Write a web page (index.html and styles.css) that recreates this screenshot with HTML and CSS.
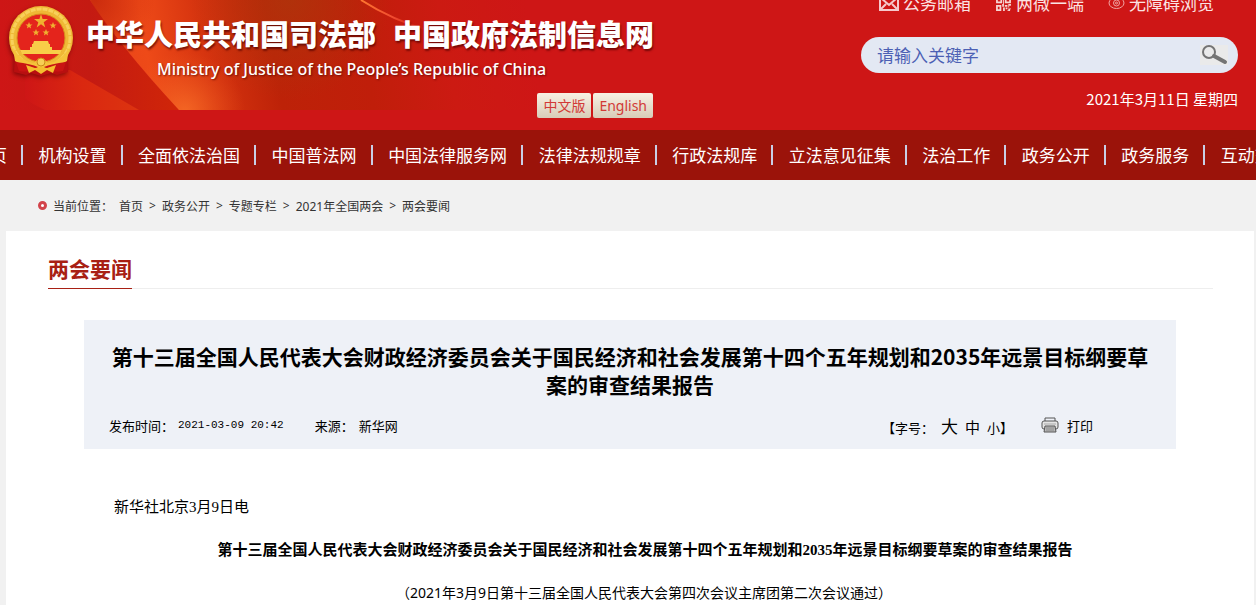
FILE: index.html
```html
<!DOCTYPE html>
<html lang="zh-CN">
<head>
<meta charset="UTF-8">
<meta name="viewport" content="width=device-width, initial-scale=1">
<title>两会要闻</title>
<link rel="stylesheet" href="styles.css">
</head>
<body>

<header class="header">
  <!-- banner artwork behind the site name -->
  <svg class="banner" width="640" height="110" viewBox="0 0 640 110" aria-hidden="true">
    <defs>
      <linearGradient id="left" x1="0" x2="1" y1="0" y2="0">
        <stop offset="0" stop-color="#ce1616"/>
        <stop offset="0.5" stop-color="#c41a12"/>
        <stop offset="1" stop-color="#d02608"/>
      </linearGradient>
      <linearGradient id="glow" gradientUnits="userSpaceOnUse" x1="100" y1="60" x2="570" y2="-20">
        <stop offset="0" stop-color="#e8441a"/>
        <stop offset="0.1" stop-color="#ee4a18"/>
        <stop offset="0.22" stop-color="#d6340f"/>
        <stop offset="0.36" stop-color="#bd2208"/>
        <stop offset="0.55" stop-color="#c01e0a"/>
        <stop offset="0.72" stop-color="#cc1a12"/>
        <stop offset="0.9" stop-color="#ce1616"/>
      </linearGradient>
      <linearGradient id="fold" gradientUnits="userSpaceOnUse" x1="25" y1="0" x2="140" y2="0">
        <stop offset="0" stop-color="#ce1616"/>
        <stop offset="0.5" stop-color="#da2810"/>
        <stop offset="1" stop-color="#dc3410"/>
      </linearGradient>
      <radialGradient id="spot" gradientUnits="userSpaceOnUse" cx="290" cy="0" r="100">
        <stop offset="0" stop-color="#a83c0c" stop-opacity="0.6"/>
        <stop offset="1" stop-color="#a83c0c" stop-opacity="0"/>
      </radialGradient>
      <radialGradient id="dark" gradientUnits="userSpaceOnUse" cx="95" cy="0" r="60">
        <stop offset="0" stop-color="#c02208" stop-opacity="0.7"/>
        <stop offset="1" stop-color="#c02208" stop-opacity="0"/>
      </radialGradient>
      <radialGradient id="foot" gradientUnits="userSpaceOnUse" cx="185" cy="112" r="60">
        <stop offset="0" stop-color="#f87028" stop-opacity="0.8"/>
        <stop offset="1" stop-color="#f05a20" stop-opacity="0"/>
      </radialGradient>
      <linearGradient id="streak" gradientUnits="userSpaceOnUse" x1="360" y1="0" x2="430" y2="30">
        <stop offset="0" stop-color="#ff7a30"/>
        <stop offset="0.5" stop-color="#f04a30"/>
        <stop offset="1" stop-color="#e02a12" stop-opacity="0"/>
      </linearGradient>
    </defs>
    <path d="M0 0H90Q118 44 179 110H0Z" fill="url(#left)"/>
    <path d="M25 70L70 70L139 110H45Q28 102 25 98Z" fill="url(#fold)"/>
    <path d="M90 0H640V110H179Q118 44 90 0Z" fill="url(#glow)"/>
    <path d="M90 0H160V60H130Q105 26 90 0Z" fill="url(#dark)"/>
    <path d="M120 45H260V110H179Z" fill="url(#foot)"/>
    <path d="M190 0H400V110H190Z" fill="url(#spot)"/>
    <path d="M361 0Q392 20 430 31" fill="none" stroke="url(#streak)" stroke-width="2"/>
  </svg>

  <div class="brand">
    <svg class="emblem" width="68" height="74" viewBox="0 0 68 74" role="img" aria-label="国徽">
      <path d="M8 48L7 68L19 71L24 69L34 72L44 69L50 71L61 68L60 48Z" fill="#b80f10"/>
      <circle cx="34" cy="34" r="32" fill="#efb835"/>
      <circle cx="34" cy="34" r="29" fill="none" stroke="#f8d05a" stroke-width="3" stroke-dasharray="5 1"/>
      <circle cx="34" cy="34" r="24" fill="#e4241c" stroke="#d88f1c"/>
      <g fill="#f0b030">
        <path d="M34 10L35.600 15H41L36.700 18.200L38.300 23.500L34 20.300L29.700 23.500L31.300 18.200L27 15H32.400Z"/>
        <path d="M22 18L23 20.500H25.500L23.500 22L24 24.500L22 23L20 24.500L20.500 22L18.500 20.500H21Z"/>
        <path d="M46 18L47 20.500H49.500L47.500 22L48 24.500L46 23L44 24.500L44.500 22L42.500 20.500H45Z"/>
        <path d="M29 25L30 27.500H32.500L30.500 29L31 31.500L29 30L27 31.500L27.500 29L25.500 27.500H28Z"/>
        <path d="M39 25L40 27.500H42.500L40.500 29L41 31.500L39 30L37 31.500L37.500 29L35.500 27.500H38Z"/>
      </g>
      <path d="M27 37H41L42 40H43V43H25V40H26ZM23 43H45V46H23ZM13 46H55L53 50H15Z" fill="#f8cd48"/>
      <path d="M6 44Q14 58 27 59Q34 50 41 59Q54 58 62 44L60 57Q48 64 39 62L34 65L29 62Q20 64 8 57Z" fill="#f5c23a"/>
      <path d="M9 58Q24 60 31 63Q26 69 12 67ZM59 58Q44 60 37 63Q42 69 56 67Z" fill="#c91413"/>
      <circle cx="34" cy="58" r="4" fill="#f7cf55" stroke="#cc8a18"/>
      <path d="M19 61L28 64L34 63L40 64L49 61L46 69L40 66L34 70L28 66L22 69Z" fill="#f5bd2e"/>
    </svg>
    <div class="names">
      <h1 class="site-name"><span>中华人民共和国司法部</span><span>中国政府法制信息网</span></h1>
      <p class="site-name-en">Ministry of Justice of the People’s Republic of China</p>
      <div class="langs">
        <button type="button" class="lang">中文版</button>
        <button type="button" class="lang">English</button>
      </div>
    </div>
  </div>

  <div class="tools">
    <div class="top-links">
      <a href="#">
        <svg width="20" height="14" viewBox="0 0 20 14" fill="none" stroke="#f6c9cc" stroke-width="2"><path d="M1 1H19V13H1ZM2 1L10 8L18 1M2 12L7 7M18 12L13 7"/></svg>
        公务邮箱
      </a>
      <a href="#">
        <svg width="17" height="14" viewBox="0 0 17 16" fill="#f6d5d2"><path fill-rule="evenodd" d="M0 0H7V7H0ZM2 2V5H5V2ZM10 0H17V7H10ZM12 2V5H15V2ZM0 9H6V16H0ZM2 11V14H4V11Z"/><path d="M8 3H9V9H8ZM7 8H9V11H7ZM8 12H10V16H8ZM10 9H13V11H10ZM14 8H17V10H15V12H14ZM11 12H13V14H11ZM14 13H17V14H16V16H13V15H14Z"/></svg>
        两微一端
      </a>
      <a href="#">
        <svg width="17" height="14" viewBox="0 0 17 14" fill="none" stroke="#f0a4a2" stroke-width="1"><ellipse cx="8.500" cy="6" rx="7.500" ry="5.500"/><circle cx="8.500" cy="6" r="3"/><circle cx="8.500" cy="6" r="1"/></svg>
        无障碍浏览
      </a>
    </div>
    <form class="search">
      <input type="text" placeholder="请输入关键字" aria-label="请输入关键字">
      <button type="button" aria-label="搜索">
        <svg width="28" height="20" viewBox="0 0 28 20" fill="none" stroke="#747474"><circle cx="9" cy="7" r="6" stroke-width="2"/><path d="M14 11L25 17" stroke-width="4" stroke-linecap="round"/></svg>
      </button>
    </form>
    <p class="date">2021年3月11日 星期四</p>
  </div>
</header>

<nav class="nav">
  <ul>
    <li><a href="#">首页</a></li>
    <li><a href="#">机构设置</a></li>
    <li><a href="#">全面依法治国</a></li>
    <li><a href="#">中国普法网</a></li>
    <li><a href="#">中国法律服务网</a></li>
    <li><a href="#">法律法规规章</a></li>
    <li><a href="#">行政法规库</a></li>
    <li><a href="#">立法意见征集</a></li>
    <li><a href="#">法治工作</a></li>
    <li><a href="#">政务公开</a></li>
    <li><a href="#">政务服务</a></li>
    <li><a href="#">互动交流</a></li>
  </ul>
</nav>

<div class="crumbs">
  <span class="dot"></span>
  <span class="here">当前位置：</span>
  <a href="#">首页</a><span>&gt;</span>
  <a href="#">政务公开</a><span>&gt;</span>
  <a href="#">专题专栏</a><span>&gt;</span>
  <a href="#">2021年全国两会</a><span>&gt;</span>
  <a href="#">两会要闻</a>
</div>

<main class="panel">
  <div class="section-head"><h2>两会要闻</h2></div>

  <article class="article">
    <div class="article-head">
      <h3>第十三届全国人民代表大会财政经济委员会关于国民经济和社会发展第十四个五年规划和2035年远景目标纲要草案的审查结果报告</h3>
      <div class="meta">
        <span>发布时间：</span>
        <time>2021-03-09 20:42</time>
        <span class="source">来源：</span>
        <span class="from">新华网</span>
        <div class="sizes">
          <span>【字号：</span>
          <button type="button" class="big">大</button>
          <button type="button" class="mid">中</button>
          <button type="button">小</button><span>】</span>
        </div>
        <button type="button" class="print">
          <svg width="18" height="16" viewBox="0 0 18 16" fill="none" stroke="#555"><path d="M4 4V1H14V4"/><rect x="1" y="4" width="16" height="8" rx="2" fill="#e4e4e4"/><path d="M3 7H15" stroke="#aaa"/><path d="M4 9H14L15 15H3Z" fill="#bbb"/><path d="M5 11H13M5 13H13" stroke="#888"/></svg>
          打印
        </button>
      </div>
    </div>

    <div class="body-text">
      <p>新华社北京3月9日电</p>
      <p class="center"><strong>第十三届全国人民代表大会财政经济委员会关于国民经济和社会发展第十四个五年规划和2035年远景目标纲要草案的审查结果报告</strong></p>
      <p class="center note">（2021年3月9日第十三届全国人民代表大会第四次会议主席团第二次会议通过）</p>
    </div>
  </article>
</main>

</body>
</html>
```
FILE: styles.css
```css
* {
  box-sizing: border-box;
}

body {
  margin: 0;
  min-height: 100vh;
  display: flex;
  flex-direction: column;
  background: #f1f1f1;
  color: #000;
  font-family: "Noto Sans", "Noto Sans CJK SC", sans-serif;
  overflow-x: hidden;
}

h1, h2, h3, p, ul {
  margin: 0;
  padding: 0;
}

a {
  color: inherit;
  text-decoration: none;
}

button {
  margin: 0;
  padding: 0;
  border: 0;
  background: none;
  color: inherit;
  font: inherit;
  cursor: pointer;
}

/* header */
.header {
  position: relative;
  height: 130px;
  display: flex;
  justify-content: space-between;
  background: #ce1616;
  color: #fff;
  overflow: hidden;
}

.banner {
  position: absolute;
  left: 0;
  top: 0;
}

.brand {
  position: relative;
  display: flex;
  gap: 11px;
  padding: 4px 0 0 7px;
}

.emblem {
  flex: none;
  filter: drop-shadow(-1px 2px 2px rgba(90, 0, 0, 0.6));
}

.names {
  padding-top: 8px;
}

.site-name {
  display: flex;
  gap: 17px;
  font-family: "Noto Sans CJK SC", sans-serif;
  font-size: 29px;
  font-weight: 900;
  line-height: 42px;
  white-space: nowrap;
  text-shadow: 1px 2px 2px rgba(80, 0, 0, 0.7);
}

.site-name-en {
  padding-left: 71px;
  font-size: 16px;
  font-weight: 500;
  line-height: 30px;
  white-space: nowrap;
  text-shadow: 1px 1px 2px rgba(80, 0, 0, 0.7);
}

.langs {
  display: flex;
  justify-content: flex-end;
  gap: 2px;
  margin-top: 9px;
  padding-right: 1px;
}

.lang {
  height: 25px;
  padding: 0 6px;
  border-radius: 2px;
  background: linear-gradient(#f8f1e3, #d8ccb8);
  color: #d23a36;
  font-size: 14px;
  line-height: 25px;
}

.tools {
  width: 377px;
  margin-right: 18px;
}

.top-links {
  display: flex;
  justify-content: space-between;
  margin-top: -8px;
  padding: 0 24px 0 18px;
  font-size: 17px;
  line-height: 24px;
  color: #fbe3e3;
}

.top-links a {
  display: flex;
  align-items: center;
  gap: 4px;
}

.search {
  display: flex;
  align-items: center;
  height: 36px;
  margin-top: 21px;
  padding: 0 10px 0 16px;
  border-radius: 18px;
  background: #e3e8f3;
}

.search input {
  flex: 1;
  min-width: 0;
  padding: 0;
  border: 0;
  outline: 0;
  background: none;
  font: 17px "Noto Sans", "Noto Sans CJK SC", sans-serif;
}

.search input::placeholder {
  color: #4c60b4;
}

.search button {
  display: flex;
  background: #eaeaea;
}

.date {
  margin-top: 14px;
  font-family: "Noto Sans CJK SC", sans-serif;
  font-size: 15px;
  line-height: 24px;
  text-align: right;
}

/* main menu, runs off both edges */
.nav {
  background: #9b130a;
  color: #fff;
  overflow: hidden;
}

.nav ul {
  display: flex;
  justify-content: space-between;
  align-items: center;
  height: 50px;
  margin: 0 -33px 0 -27px;
  list-style: none;
  font-size: 17px;
  line-height: 20px;
  white-space: nowrap;
}

.nav li {
  padding-right: 14px;
  border-right: 2px solid #c9cfe6;
}

.nav a {
  display: block;
  padding-top: 1px;
  line-height: 19px;
}

.nav li:last-child {
  padding-right: 0;
  border-right: 0;
}

/* breadcrumb */
.crumbs {
  display: flex;
  align-items: center;
  gap: 6px;
  height: 51px;
  padding-left: 38px;
  color: #333;
  font-size: 12px;
}

.dot {
  width: 9px;
  height: 9px;
  border: 3px solid #d2434a;
  border-radius: 50%;
  background: #fff;
}

/* content */
.panel {
  flex: 1;
  margin: 0 2px 0 6px;
  padding: 21px 41px 0 42px;
  background: #fff;
}

.section-head {
  display: flex;
  border-bottom: 1px solid #eee;
}

.section-head h2 {
  margin-bottom: -1px;
  padding-bottom: 1px;
  border-bottom: 1px solid #a82014;
  color: #a82014;
  font-size: 21px;
  line-height: 35px;
}

.article {
  margin: 31px 37px 0 36px;
}

.article-head {
  padding: 22px 24px 11px;
  background: #eef1f7;
}

.article-head h3 {
  font-family: "Noto Sans CJK SC", sans-serif;
  font-size: 21px;
  line-height: 28px;
  text-align: center;
}

.meta {
  display: flex;
  align-items: center;
  height: 26px;
  margin-top: 14px;
  padding: 0 59px 0 1px;
  font-size: 13px;
}

.meta time {
  margin-left: 4px;
  font-family: "Liberation Mono", monospace;
  font-size: 11px;
}

.source {
  margin-left: 31px;
}

.from {
  margin-left: 5px;
}

.sizes {
  display: flex;
  align-items: baseline;
  gap: 7px;
  margin-left: auto;
}

.sizes .big {
  font-size: 17px;
}

.sizes .mid {
  font-size: 15px;
}

.sizes button + span {
  margin-left: -7px;
}

.print {
  display: flex;
  align-items: center;
  gap: 8px;
  margin-left: 28px;
}

.body-text {
  padding-top: 44px;
  font-family: "Liberation Serif", "Noto Sans CJK SC", sans-serif;
  font-size: 15px;
  line-height: 28px;
}

.body-text p {
  margin-bottom: 15px;
  text-indent: 2em;
}

.body-text .center {
  text-align: center;
}

.body-text .note {
  margin-bottom: 0;
  font-family: "Noto Sans", "Noto Sans CJK SC", sans-serif;
  font-size: 14px;
}
```
